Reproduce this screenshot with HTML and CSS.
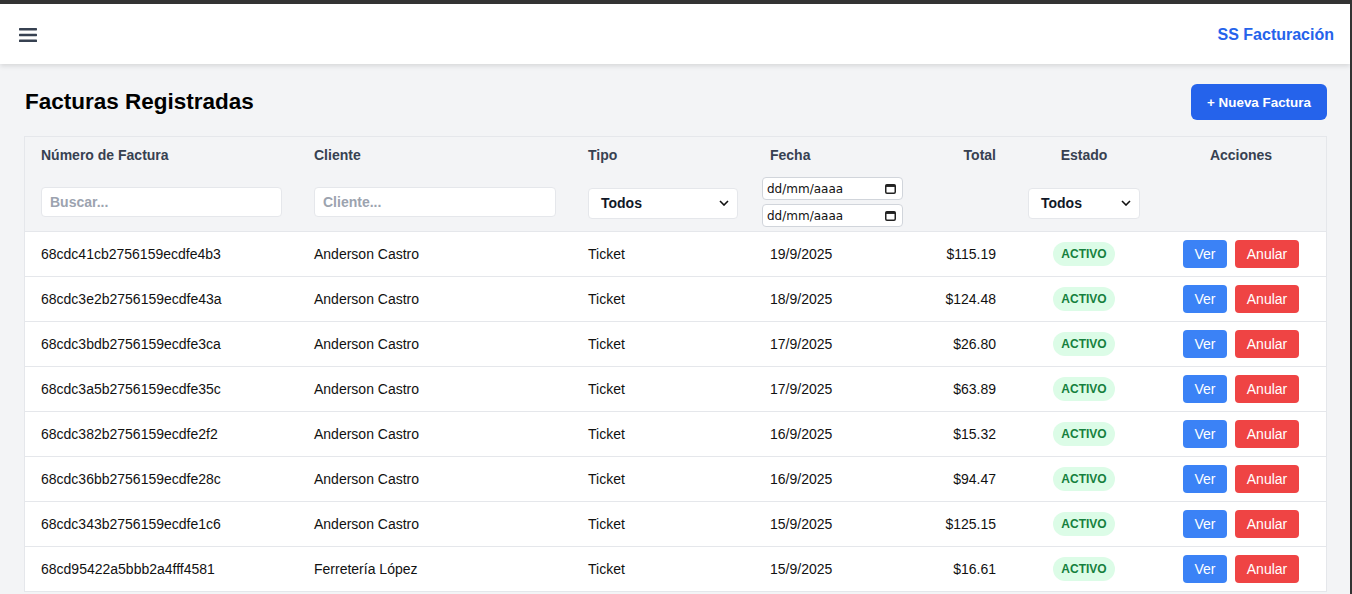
FILE: index.html
```html
<!DOCTYPE html>
<html lang="es">
<head>
<meta charset="utf-8">
<title>SS Facturación</title>
<link rel="stylesheet" href="styles.css">
</head>
<body>
<header class="topbar">
  <button class="menu-btn" aria-label="Menú">
    <svg width="18" height="14" viewBox="0 0 18 14"><rect x="0" y="0" width="18" height="2.4" rx="0.6" fill="#374151"/><rect x="0" y="5.8" width="18" height="2.4" rx="0.6" fill="#374151"/><rect x="0" y="11.6" width="18" height="2.4" rx="0.6" fill="#374151"/></svg>
  </button>
  <div class="brand">SS Facturación</div>
</header>
<main class="content">
  <div class="page-head">
    <h1>Facturas Registradas</h1>
    <button class="btn-primary">+ Nueva Factura</button>
  </div>
  <div class="table-wrap">
    <table class="grid">
      <colgroup>
        <col class="c1"><col class="c2"><col class="c3"><col class="c4"><col class="c5"><col class="c6"><col class="c7">
      </colgroup>
      <thead>
        <tr>
          <th><div class="th-label">Número de Factura</div><div class="th-filter"><input class="f-input" placeholder="Buscar..."></div></th>
          <th><div class="th-label">Cliente</div><div class="th-filter"><input class="f-input" placeholder="Cliente..."></div></th>
          <th><div class="th-label">Tipo</div><div class="th-filter"><div class="f-select w150"><span>Todos</span><svg width="10" height="6" viewBox="0 0 10 6"><path d="M1 1l4 4 4-4" fill="none" stroke="#111" stroke-width="1.6"/></svg></div></div></th>
          <th class="th-date"><div class="th-label">Fecha</div><div class="th-filter col">
            <div class="f-date"><span>dd/mm/aaaa</span><svg width="11" height="11" viewBox="0 0 11 11"><rect x="0.75" y="1.75" width="9.5" height="8.5" rx="1.2" fill="none" stroke="#222" stroke-width="1.5"/><rect x="0.75" y="1.75" width="9.5" height="2.2" fill="#222"/></svg></div>
            <div class="f-date"><span>dd/mm/aaaa</span><svg width="11" height="11" viewBox="0 0 11 11"><rect x="0.75" y="1.75" width="9.5" height="8.5" rx="1.2" fill="none" stroke="#222" stroke-width="1.5"/><rect x="0.75" y="1.75" width="9.5" height="2.2" fill="#222"/></svg></div>
          </div></th>
          <th class="right"><div class="th-label">Total</div><div class="th-filter"></div></th>
          <th class="center"><div class="th-label">Estado</div><div class="th-filter center"><div class="f-select w112"><span>Todos</span><svg width="10" height="6" viewBox="0 0 10 6"><path d="M1 1l4 4 4-4" fill="none" stroke="#111" stroke-width="1.6"/></svg></div></div></th>
          <th class="center"><div class="th-label">Acciones</div><div class="th-filter"></div></th>
        </tr>
      </thead>
      <tbody>
        <tr><td>68cdc41cb2756159ecdfe4b3</td><td>Anderson Castro</td><td>Ticket</td><td>19/9/2025</td><td class="right">$115.19</td><td class="center"><span class="badge">ACTIVO</span></td><td class="center"><div class="actions"><button class="btn-ver">Ver</button><button class="btn-anular">Anular</button></div></td></tr>
        <tr><td>68cdc3e2b2756159ecdfe43a</td><td>Anderson Castro</td><td>Ticket</td><td>18/9/2025</td><td class="right">$124.48</td><td class="center"><span class="badge">ACTIVO</span></td><td class="center"><div class="actions"><button class="btn-ver">Ver</button><button class="btn-anular">Anular</button></div></td></tr>
        <tr><td>68cdc3bdb2756159ecdfe3ca</td><td>Anderson Castro</td><td>Ticket</td><td>17/9/2025</td><td class="right">$26.80</td><td class="center"><span class="badge">ACTIVO</span></td><td class="center"><div class="actions"><button class="btn-ver">Ver</button><button class="btn-anular">Anular</button></div></td></tr>
        <tr><td>68cdc3a5b2756159ecdfe35c</td><td>Anderson Castro</td><td>Ticket</td><td>17/9/2025</td><td class="right">$63.89</td><td class="center"><span class="badge">ACTIVO</span></td><td class="center"><div class="actions"><button class="btn-ver">Ver</button><button class="btn-anular">Anular</button></div></td></tr>
        <tr><td>68cdc382b2756159ecdfe2f2</td><td>Anderson Castro</td><td>Ticket</td><td>16/9/2025</td><td class="right">$15.32</td><td class="center"><span class="badge">ACTIVO</span></td><td class="center"><div class="actions"><button class="btn-ver">Ver</button><button class="btn-anular">Anular</button></div></td></tr>
        <tr><td>68cdc36bb2756159ecdfe28c</td><td>Anderson Castro</td><td>Ticket</td><td>16/9/2025</td><td class="right">$94.47</td><td class="center"><span class="badge">ACTIVO</span></td><td class="center"><div class="actions"><button class="btn-ver">Ver</button><button class="btn-anular">Anular</button></div></td></tr>
        <tr><td>68cdc343b2756159ecdfe1c6</td><td>Anderson Castro</td><td>Ticket</td><td>15/9/2025</td><td class="right">$125.15</td><td class="center"><span class="badge">ACTIVO</span></td><td class="center"><div class="actions"><button class="btn-ver">Ver</button><button class="btn-anular">Anular</button></div></td></tr>
        <tr><td>68cd95422a5bbb2a4fff4581</td><td>Ferretería López</td><td>Ticket</td><td>15/9/2025</td><td class="right">$16.61</td><td class="center"><span class="badge">ACTIVO</span></td><td class="center"><div class="actions"><button class="btn-ver">Ver</button><button class="btn-anular">Anular</button></div></td></tr>
      </tbody>
    </table>
  </div>
</main>
</body>
</html>
```
FILE: styles.css
```css
* { box-sizing: border-box; }
html, body { height: 100%; }
body {
  margin: 0;
  background: #f3f4f6;
  font-family: "Liberation Sans", Arial, sans-serif;
  color: #111827;
  border-top: 4px solid #333333;
  border-right: 2px solid #333333;
  overflow: hidden;
}
.topbar {
  height: 60px;
  background: #ffffff;
  display: flex;
  align-items: center;
  justify-content: space-between;
  padding: 0 16px 0 19px;
  box-shadow: 0 2px 5px rgba(0,0,0,0.12);
  position: relative;
  z-index: 1;
}
.menu-btn {
  background: none;
  border: 0;
  padding: 0;
  display: flex;
  margin-top: 1px;
}
.brand {
  color: #2563eb;
  font-size: 16px;
  font-weight: 600;
  margin-top: 1px;
}
.content { padding: 20px 23px 0 24px; }
.page-head {
  display: flex;
  align-items: center;
  justify-content: space-between;
  margin-bottom: 16px;
}
.page-head h1 {
  margin: 0 0 0 1px;
  font-size: 22.5px;
  font-weight: 700;
  color: #000;
  line-height: 36px;
}
.btn-primary {
  background: #2563eb;
  color: #fff;
  border: 0;
  border-radius: 6px;
  height: 36px;
  width: 136px;
  font-family: inherit;
  font-size: 13.4px;
  font-weight: 700;
}
.table-wrap {
  background: #fff;
  border: 1px solid #e5e7eb;
  border-bottom: 0;
}
.grid {
  width: 100%;
  border-collapse: collapse;
  table-layout: fixed;
  font-size: 14px;
}
.c1 { width: 273px; }
.c2 { width: 274px; }
.c3 { width: 182px; }
.c4 { width: 158px; }
.c5 { width: 100px; }
.c6 { width: 144px; }
.c7 { width: 170px; }
.grid th {
  background: #f3f4f6;
  text-align: left;
  padding: 8px 16px 4px;
  vertical-align: top;
  font-weight: 700;
  color: #374151;
  border-bottom: 1px solid #e5e7eb;
}
.grid th.th-date { padding-left: 8px; padding-right: 8px; }
.grid th.th-date .th-label { padding-left: 8px; }
.th-label { height: 20px; line-height: 20px; }
.th-filter {
  margin-top: 12px;
  height: 50px;
  display: flex;
  align-items: center;
}
.th-filter.center { justify-content: center; }
.th-filter.col { flex-direction: column; align-items: flex-start; justify-content: space-between; }
.right { text-align: right !important; }
.center { text-align: center !important; }
.f-input {
  width: 100%;
  height: 30px;
  border: 1px solid #e5e7eb;
  border-radius: 4px;
  padding: 0 8px;
  font-family: inherit;
  font-size: 14px;
  font-weight: 700;
  color: #111;
  background: #fff;
}
.f-input::placeholder { color: #9ca3af; }
.f-select {
  height: 31px;
  background: #fff;
  border: 1px solid #e5e7eb;
  border-radius: 4px;
  display: flex;
  align-items: center;
  justify-content: space-between;
  padding: 0 8px 0 12px;
  font-weight: 700;
  color: #111827;
  margin-top: 2px;
}
.w150 { width: 150px; }
.w112 { width: 112px; }
.f-date {
  width: 141px;
  height: 23px;
  background: #fff;
  border: 1px solid #d1d5db;
  border-radius: 4px;
  display: flex;
  align-items: center;
  justify-content: space-between;
  padding: 0 6px 0 4px;
  font-family: "DejaVu Sans", sans-serif;
  font-weight: 400;
  font-size: 12px;
  color: #111;
}
.grid td {
  height: 45px;
  padding: 0 16px;
  border-bottom: 1px solid #e5e7eb;
  color: #111;
  vertical-align: middle;
  white-space: nowrap;
}
.badge {
  display: inline-block;
  background: #dcfce7;
  color: #15803d;
  font-size: 12px;
  font-weight: 700;
  line-height: 24px;
  height: 24px;
  padding: 0 8px;
  border-radius: 12px;
}
.actions {
  display: flex;
  justify-content: center;
  gap: 8px;
}
.actions button {
  height: 28px;
  border: 0;
  border-radius: 4px;
  color: #fff;
  font-family: inherit;
  font-size: 14px;
}
.btn-ver { background: #3b82f6; width: 44px; }
.btn-anular { background: #ef4444; width: 64px; }
```
